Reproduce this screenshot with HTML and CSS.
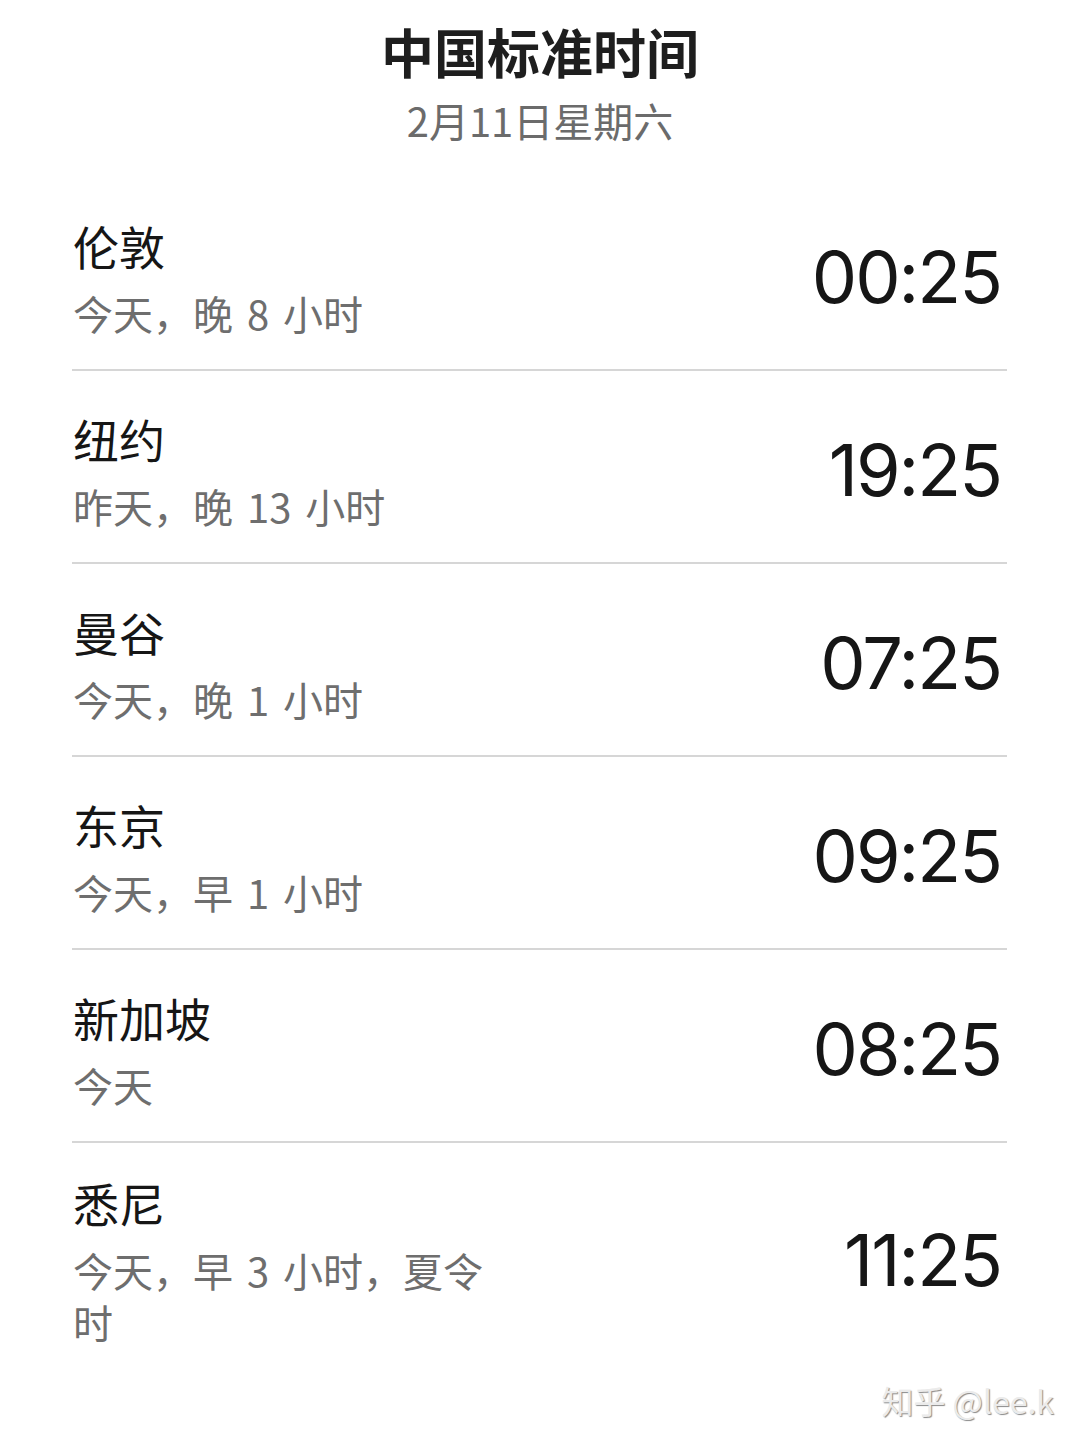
FILE: index.html
```html
<!DOCTYPE html>
<html lang="zh-CN">
<head>
<meta charset="utf-8">
<title>世界时钟</title>
<link rel="stylesheet" href="styles.css">
</head>
<body>
<div class="page">
  <header class="header">
    <h1 class="title">中国标准时间</h1>
    <div class="date">2月11日星期六</div>
  </header>
  <ul class="list">
    <li class="row">
      <div class="info"><div class="city">伦敦</div><div class="offset">今天，晚 8 小时</div></div>
      <div class="time">00:25</div>
    </li>
    <li class="row">
      <div class="info"><div class="city">纽约</div><div class="offset">昨天，晚 13 小时</div></div>
      <div class="time">19:25</div>
    </li>
    <li class="row">
      <div class="info"><div class="city">曼谷</div><div class="offset">今天，晚 1 小时</div></div>
      <div class="time">07:25</div>
    </li>
    <li class="row">
      <div class="info"><div class="city">东京</div><div class="offset">今天，早 1 小时</div></div>
      <div class="time">09:25</div>
    </li>
    <li class="row">
      <div class="info"><div class="city">新加坡</div><div class="offset">今天</div></div>
      <div class="time">08:25</div>
    </li>
    <li class="row row--tall">
      <div class="info"><div class="city">悉尼</div><div class="offset">今天，早 3 小时，夏令时</div></div>
      <div class="time">11:25</div>
    </li>
  </ul>
  <div class="watermark">知乎 @lee.k</div>
</div>
</body>
</html>
```

FILE: styles.css
```css
* { box-sizing: border-box; }
html, body {
  margin: 0;
  padding: 0;
  background: #ffffff;
}
body {
  font-family: "Noto Sans CJK SC", "Noto Sans", sans-serif;
  color: #1b1b1b;
}
.page {
  position: relative;
  width: 1080px;
  height: 1444px;
  overflow: hidden;
}
.header {
  display: flex;
  flex-direction: column;
  align-items: center;
  padding-top: 19px;
}
.title {
  margin: 0;
  font-size: 53px;
  line-height: 64px;
  font-weight: 700;
  color: #1e1e1e;
}
.date {
  margin-top: 12px;
  font-size: 40px;
  line-height: 50px;
  color: #6b6b6b;
}
.list {
  list-style: none;
  margin: 33px 73px 0 72px;
  padding: 0;
}
.row {
  display: flex;
  align-items: center;
  justify-content: space-between;
  padding: 37px 6px 30px 1px;
  border-bottom: 2px solid #d6d6d6;
}
.row:last-child { border-bottom: none; }
.row--tall { padding-top: 29px; }
.info {
  display: flex;
  flex-direction: column;
  max-width: 430px;
}
.city {
  font-size: 46px;
  line-height: 60px;
  color: #161616;
}
.offset {
  margin-top: 12px;
  font-size: 40px;
  line-height: 52px;
  color: #6e6e6e;
  word-spacing: 5px;
}
.time {
  font-family: "Inter", "Roboto", sans-serif;
  font-size: 72px;
  font-weight: 400;
  line-height: 80px;
  color: #161616;
  letter-spacing: -2px;
}
.watermark {
  position: absolute;
  right: 26px;
  bottom: 24px;
  font-size: 32px;
  line-height: 40px;
  color: #ebebeb;
  text-shadow: 1px 1px 1px #8a8a8a;
}
```
